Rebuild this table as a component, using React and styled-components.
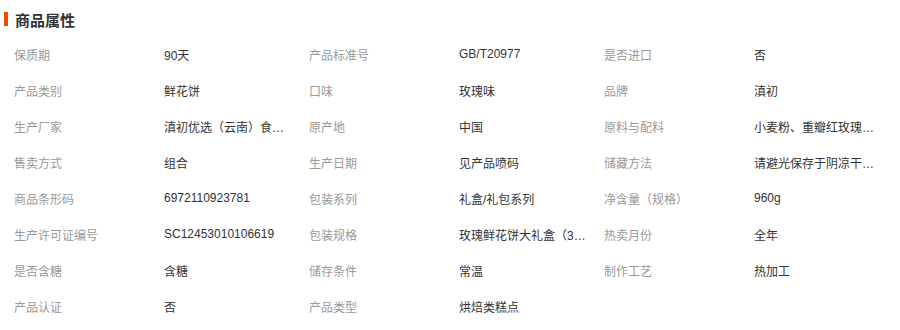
import React from "react";
import styled, { createGlobalStyle } from "styled-components";

const GlobalStyle = createGlobalStyle`
  body {
    margin: 0;
    background: #fff;
    font-family: "Liberation Sans", "Noto Sans CJK SC", sans-serif;
  }
`;

const Wrap = styled.div`
  width: 900px;
  height: 330px;
  overflow: hidden;
  background: #fff;
`;

const Header = styled.div`
  display: flex;
  align-items: center;
  gap: 7px;
  height: 36px;
  padding: 2px 0 0 4px;
  box-sizing: border-box;
`;

const Bar = styled.span`
  width: 4px;
  height: 14px;
  background: #ff4400;
`;

const Title = styled.h3`
  margin: 0;
  font-size: 15px;
  font-weight: bold;
  color: #333;
  font-family: "Noto Sans CJK SC", sans-serif;
`;

const Grid = styled.div`
  display: grid;
  grid-template-columns: repeat(3, 150px 145px);
  grid-auto-rows: 36px;
  padding-left: 14px;
`;

const Cell = styled.div`
  display: flex;
  align-items: center;
  font-size: 12px;
  color: ${(p) => (p.$label ? "#999" : "#333")};
  min-width: 0;
`;

const Text = styled.span`
  max-width: 130px;
  white-space: nowrap;
  overflow: hidden;
  text-overflow: ellipsis;
`;

const items = [
  ["保质期", "90天"],
  ["产品标准号", "GB/T20977"],
  ["是否进口", "否"],
  ["产品类别", "鲜花饼"],
  ["口味", "玫瑰味"],
  ["品牌", "滇初"],
  ["生产厂家", "滇初优选（云南）食品有限公司"],
  ["原产地", "中国"],
  ["原料与配料", "小麦粉、重瓣红玫瑰、白砂糖"],
  ["售卖方式", "组合"],
  ["生产日期", "见产品喷码"],
  ["储藏方法", "请避光保存于阴凉干燥处"],
  ["商品条形码", "6972110923781"],
  ["包装系列", "礼盒/礼包系列"],
  ["净含量（规格）", "960g"],
  ["生产许可证编号", "SC12453010106619"],
  ["包装规格", "玫瑰鲜花饼大礼盒（32枚）"],
  ["热卖月份", "全年"],
  ["是否含糖", "含糖"],
  ["储存条件", "常温"],
  ["制作工艺", "热加工"],
  ["产品认证", "否"],
  ["产品类型", "烘焙类糕点"],
];

export default function App() {
  return (
    <Wrap>
      <GlobalStyle />
      <Header>
        <Bar />
        <Title>商品属性</Title>
      </Header>
      <Grid>
        {items.map(([k, v]) => (
          <React.Fragment key={k}>
            <Cell $label>
              <Text>{k}</Text>
            </Cell>
            <Cell>
              <Text>{v}</Text>
            </Cell>
          </React.Fragment>
        ))}
      </Grid>
    </Wrap>
  );
}
